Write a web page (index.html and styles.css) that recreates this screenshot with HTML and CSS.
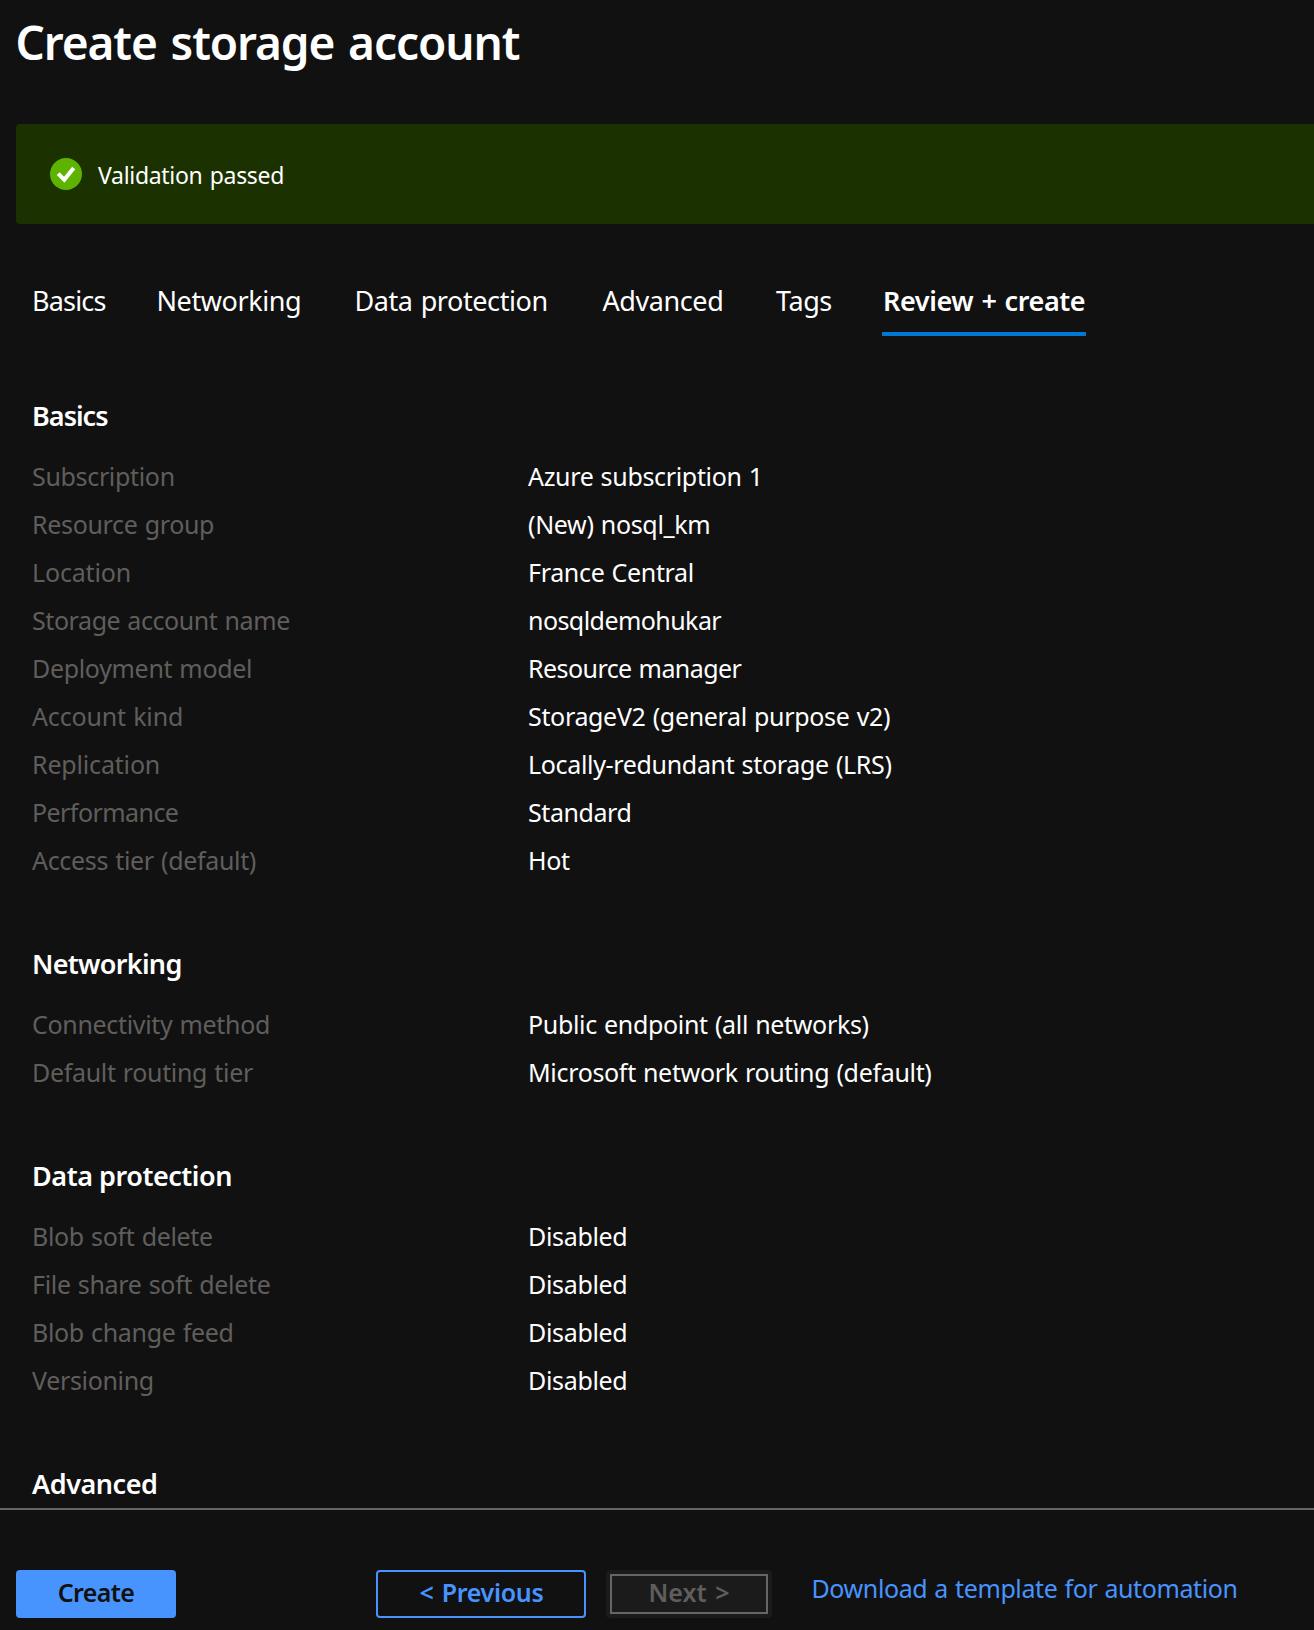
FILE: index.html
```
<!DOCTYPE html>
<html lang="en">
<head>
<meta charset="utf-8">
<title>Create storage account</title>
<link rel="stylesheet" href="styles.css">
</head>
<body>
<div class="page">
  <h1 class="title">Create storage account</h1>

  <div class="banner">
    <svg class="banner-icon" viewBox="0 0 32 32" width="32" height="32" aria-hidden="true">
      <circle cx="16" cy="16" r="16" fill="#5db300"/>
      <path d="M8.2 15.6 L14.3 21.8 L23.7 10" fill="none" stroke="#fff" stroke-width="4"/>
    </svg>
    <span class="banner-text">Validation passed</span>
  </div>

  <nav class="tabs">
    <a class="tab narrow">Basics</a>
    <a class="tab">Networking</a>
    <a class="tab">Data protection</a>
    <a class="tab">Advanced</a>
    <a class="tab">Tags</a>
    <a class="tab active">Review + create</a>
  </nav>

  <main class="summary">
    <section class="section">
      <h2 class="heading narrow">Basics</h2>
      <dl class="rows">
        <dt>Subscription</dt><dd>Azure subscription 1</dd>
        <dt>Resource group</dt><dd>(New) nosql_km</dd>
        <dt class="loose">Location</dt><dd>France Central</dd>
        <dt class="snug">Storage account name</dt><dd class="tight">nosqldemohukar</dd>
        <dt>Deployment model</dt><dd class="tight">Resource manager</dd>
        <dt class="loose">Account kind</dt><dd>StorageV2 (general purpose v2)</dd>
        <dt class="loose">Replication</dt><dd>Locally-redundant storage (LRS)</dd>
        <dt class="tight">Performance</dt><dd class="snug">Standard</dd>
        <dt>Access tier (default)</dt><dd>Hot</dd>
      </dl>
    </section>
    <section class="section">
      <h2 class="heading">Networking</h2>
      <dl class="rows">
        <dt>Connectivity method</dt><dd>Public endpoint (all networks)</dd>
        <dt>Default routing tier</dt><dd>Microsoft network routing (default)</dd>
      </dl>
    </section>
    <section class="section">
      <h2 class="heading wide">Data protection</h2>
      <dl class="rows">
        <dt>Blob soft delete</dt><dd>Disabled</dd>
        <dt>File share soft delete</dt><dd>Disabled</dd>
        <dt>Blob change feed</dt><dd>Disabled</dd>
        <dt>Versioning</dt><dd>Disabled</dd>
      </dl>
    </section>
    <section class="section">
      <h2 class="heading wide">Advanced</h2>
    </section>
  </main>

  <footer class="footer">
    <button class="btn primary">Create</button>
    <button class="btn outline">&lt; Previous</button>
    <button class="btn disabled" disabled><span class="inner">Next &gt;</span></button>
    <a class="link">Download a template for automation</a>
  </footer>
</div>
</body>
</html>
```
FILE: styles.css
```
* {
  box-sizing: border-box;
}

body {
  margin: 0;
  background: #111;
  color: #fff;
  font-family: "Noto Sans", "Open Sans", sans-serif;
  overflow: hidden;
}

.page {
  display: flex;
  flex-direction: column;
  width: 1314px;
  height: 1630px;
}

.title {
  margin: 10px 0 50px 15.5px;
  font-size: 46px;
  line-height: 64px;
  font-weight: 600;
  letter-spacing: -1.1px;
  word-spacing: 3px;
  white-space: nowrap;
}

.banner {
  display: flex;
  align-items: center;
  flex: none;
  height: 100px;
  margin-left: 16px;
  padding: 0 34px;
  border-radius: 4px 0 0 4px;
  background: #1b3100;
}

.banner-icon {
  display: block;
}

.banner-text {
  margin-left: 16px;
  padding-top: 2px;
  font-size: 23px;
  line-height: 32px;
  letter-spacing: -0.3px;
  word-spacing: 1.5px;
}

.tabs {
  display: grid;
  grid-template-columns: 124.5px 198px 248px 173.5px 107px 204px;
  flex: none;
  margin: 56px 0 0 31px;
}

.tab {
  height: 56px;
  padding: 1px 0 0 1px;
  font-size: 27px;
  line-height: 40px;
  letter-spacing: -0.42px;
  word-spacing: 1.5px;
  white-space: nowrap;
}

.tab.narrow {
  letter-spacing: -0.82px;
}

.tab.active {
  border-bottom: 4px solid #0078d4;
  font-weight: 600;
  letter-spacing: -0.4px;
}

.summary {
  display: flex;
  flex-direction: column;
  flex: none;
  height: 1172px;
  gap: 59px;
  padding: 59px 0 0 32px;
  overflow: hidden;
}

.heading {
  height: 40px;
  margin: 0;
  padding-top: 1px;
  font-size: 27px;
  line-height: 40px;
  font-weight: 600;
  letter-spacing: -0.7px;
}

.heading.narrow {
  letter-spacing: -0.98px;
}

.heading.wide {
  letter-spacing: -0.46px;
}

.rows {
  display: grid;
  grid-template-columns: 496px 1fr;
  grid-auto-rows: 48px;
  margin: 17px 0 0;
  font-size: 25px;
  line-height: 48px;
  letter-spacing: -0.33px;
  word-spacing: 1px;
  white-space: nowrap;
}

.rows dt {
  color: #605e5c;
}

.rows dd {
  margin: 0;
}

.rows .loose {
  letter-spacing: -0.17px;
}

.rows .snug {
  letter-spacing: -0.42px;
}

.rows .tight {
  letter-spacing: -0.56px;
}

.footer {
  display: flex;
  align-items: flex-start;
  flex: none;
  height: 122px;
  padding: 60px 0 0 16px;
  border-top: 2px solid #666;
}

.btn {
  height: 48px;
  padding: 0 0 4px;
  border: 0;
  border-radius: 4px;
  background: none;
  font: 600 25px/36px "Noto Sans", "Open Sans", sans-serif;
  letter-spacing: -0.3px;
  word-spacing: 2px;
}

.primary {
  width: 160px;
  background: #4894fe;
  color: #111;
  letter-spacing: -0.64px;
}

.outline {
  width: 210px;
  margin-left: 200px;
  padding-left: 1px;
  border: 2px solid #4894fe;
  color: #4894fe;
}

.disabled {
  width: 166px;
  margin-left: 20px;
  padding: 4px;
  background: #1b1b1b;
  color: #605e5c;
  letter-spacing: 0;
}

.inner {
  display: block;
  height: 40px;
  border: 2px solid #666;
  line-height: 33px;
}

.link {
  margin-left: 39.5px;
  color: #4894fe;
  font-size: 25px;
  line-height: 36px;
  letter-spacing: -0.4px;
  word-spacing: 1px;
}
```
